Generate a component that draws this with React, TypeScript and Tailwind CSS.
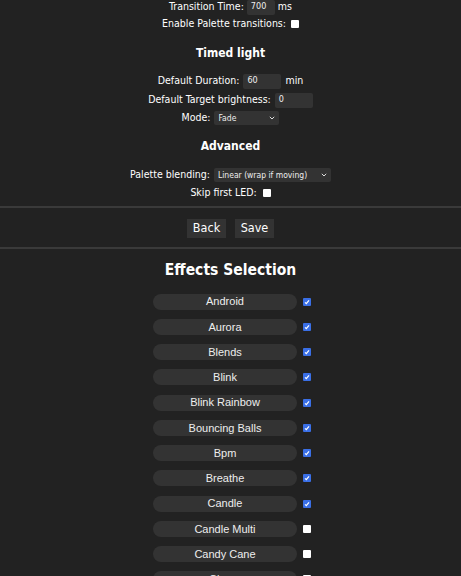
import type { ReactNode } from 'react';

const effects: [string, boolean][] = [
  ['Android', true],
  ['Aurora', true],
  ['Blends', true],
  ['Blink', true],
  ['Blink Rainbow', true],
  ['Bouncing Balls', true],
  ['Bpm', true],
  ['Breathe', true],
  ['Candle', true],
  ['Candle Multi', false],
  ['Candy Cane', false],
  ['Chase', false],
];

function Box({ checked = false }: { checked?: boolean }) {
  if (checked) {
    return (
      <span className="inline-flex w-[8px] h-[8px] rounded-[1px] bg-[#3a6fe6] items-center justify-center shrink-0">
        <svg width="6" height="6" viewBox="0 0 6 6">
          <path d="M1 3.4 L2.3 4.6 L5 1.4" stroke="#fff" strokeWidth="1.2" fill="none" />
        </svg>
      </span>
    );
  }
  return <span className="inline-block w-[8px] h-[8px] rounded-[1px] bg-white shrink-0" />;
}

function Row({ h, children }: { h: string; children: ReactNode }) {
  return <div className={`flex items-center justify-center ${h}`}>{children}</div>;
}

function Field({ value, w }: { value: string; w: string }) {
  return (
    <span className={`inline-flex items-center h-[15px] ${w} bg-[#333] rounded-[2px] pl-[4px] text-[9px] text-[#eee]`}>
      {value}
    </span>
  );
}

function Select({ value, w }: { value: string; w: string }) {
  return (
    <span className={`inline-flex items-center justify-between h-[14px] ${w} bg-[#333] rounded-[2px] px-[4px] text-[8.5px] text-[#eee]`}>
      {value}
      <svg width="6" height="4" viewBox="0 0 6 4">
        <path d="M0.8 0.8 L3 3 L5.2 0.8" stroke="#ddd" strokeWidth="1" fill="none" />
      </svg>
    </span>
  );
}

export default function App() {
  return (
    <div
      className="min-h-screen bg-[#222] text-white text-[10.5px] overflow-hidden"
      style={{ fontFamily: '"DejaVu Sans Condensed", "DejaVu Sans", Verdana, sans-serif' }}
    >
      <div className="-mt-[2px]">
        <Row h="h-[17px]">
          <span>Transition Time:</span>
          <span className="ml-[3px]"><Field value="700" w="w-[28px]" /></span>
          <span className="ml-[3px]">ms</span>
        </Row>
        <Row h="h-[18px]">
          <span>Enable Palette transitions:</span>
          <span className="ml-[5px] flex"><Box /></span>
        </Row>

        <h2 className="mt-[10px] h-[20px] flex items-center justify-center font-bold text-[12px]">Timed light</h2>

        <div className="mt-[8px]">
          <Row h="h-[19px]">
            <span>Default Duration:</span>
            <span className="ml-[4px]"><Field value="60" w="w-[38px]" /></span>
            <span className="ml-[4px]">min</span>
          </Row>
          <Row h="h-[19px]">
            <span>Default Target brightness:</span>
            <span className="ml-[4px]"><Field value="0" w="w-[38px]" /></span>
          </Row>
          <Row h="h-[17px]">
            <span>Mode:</span>
            <span className="ml-[4px]"><Select value="Fade" w="w-[65px]" /></span>
          </Row>
        </div>

        <h2 className="mt-[10px] h-[20px] flex items-center justify-center font-bold text-[12px]">Advanced</h2>

        <div className="mt-[9px]">
          <Row h="h-[19px]">
            <span>Palette blending:</span>
            <span className="ml-[4px]"><Select value="Linear (wrap if moving)" w="w-[117px]" /></span>
          </Row>
          <Row h="h-[18px]">
            <span>Skip first LED:</span>
            <span className="ml-[6px] flex"><Box /></span>
          </Row>
        </div>

        <hr className="mt-[4px] border-0 h-[2px] bg-[#3a3a3a]" />

        <div className="mt-[11px] flex justify-center gap-[9px] text-[12.5px]">
          <button className="h-[19px] w-[39px] bg-[#333] flex items-center justify-center">Back</button>
          <button className="h-[19px] w-[39px] bg-[#333] flex items-center justify-center">Save</button>
        </div>

        <hr className="mt-[9px] border-0 h-[2px] bg-[#3a3a3a]" />

        <h1 className="mt-[10px] h-[24px] flex items-center justify-center font-bold text-[15.5px]">Effects Selection</h1>

        <div className="mt-[6px]">
          {effects.map(([name, on]) => (
            <div key={name} className="h-[25.25px] flex items-center justify-center pl-[3px]">
              <span
                className="w-[144px] h-[16px] rounded-full bg-[#333] flex items-center justify-center text-[11px] text-[#eee]"
                style={{ fontFamily: '"Liberation Sans", Arial, sans-serif' }}
              >
                {name}
              </span>
              <span className="ml-[6px] flex"><Box checked={on} /></span>
            </div>
          ))}
        </div>
      </div>
    </div>
  );
}
